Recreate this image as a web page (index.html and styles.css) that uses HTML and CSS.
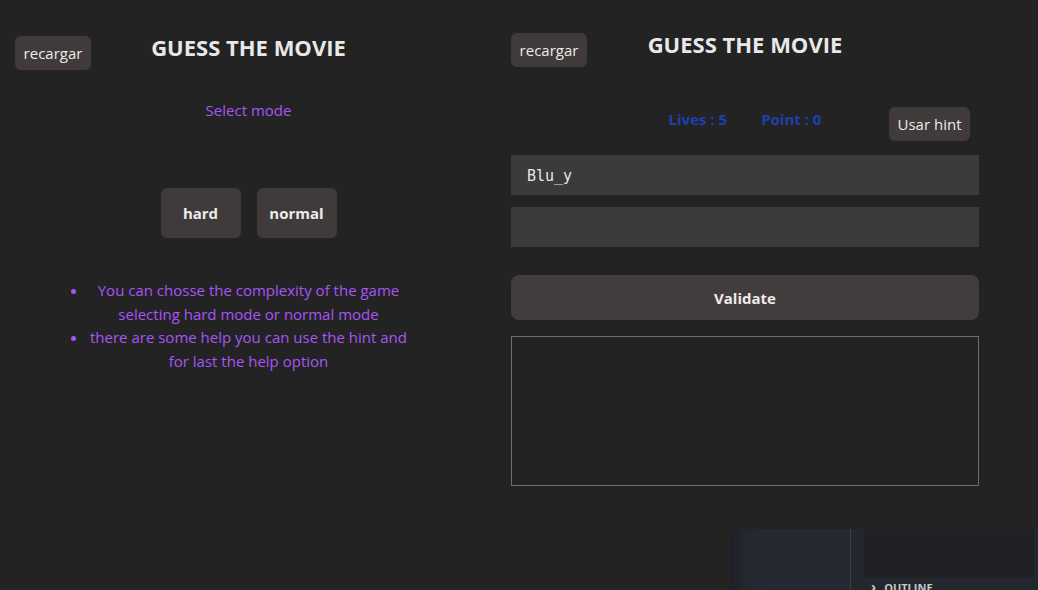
FILE: index.html
```html
<!DOCTYPE html>
<html lang="en">
<head>
<meta charset="utf-8">
<title>Guess the movie</title>
<link rel="stylesheet" href="styles.css">
</head>
<body>
<div class="page">
  <section class="panel panel-left">
    <header class="head">
      <button class="btn btn-reload">recargar</button>
      <h1 class="title">GUESS THE MOVIE</h1>
    </header>
    <p class="select">Select mode</p>
    <div class="modes">
      <button class="btn btn-mode">hard</button>
      <button class="btn btn-mode">normal</button>
    </div>
    <ul class="rules">
      <li>You can chosse the complexity of the game selecting hard mode or normal mode</li>
      <li>there are some help you can use the hint and for last the help option</li>
    </ul>
  </section>
  <section class="panel panel-right">
    <header class="head">
      <button class="btn btn-reload">recargar</button>
      <h1 class="title">GUESS THE MOVIE</h1>
    </header>
    <div class="stats">
      <div class="stats-text"><span>Lives : 5</span><span>Point : 0</span></div>
      <button class="btn btn-hint">Usar hint</button>
    </div>
    <div class="field field-word">Blu_y</div>
    <div class="field"></div>
    <button class="btn btn-validate">Validate</button>
    <div class="output"></div>
  </section>
</div>
<div class="ide">
  <div class="ide-side"></div>
  <div class="ide-main">
    <div class="ide-box"></div>
    <div class="ide-outline"><span class="chev">›</span>OUTLINE</div>
  </div>
</div>
</body>
</html>
```

FILE: styles.css
```css
* { box-sizing: border-box; }
html, body { margin: 0; padding: 0; }
body {
  background: #232323;
  font-family: "Open Sans", "Noto Sans", sans-serif;
  color: #e6e6e6;
  width: 1038px;
  height: 590px;
  overflow: hidden;
  position: relative;
}
.page { display: flex; }
.panel-left { width: 497px; padding: 36px 15px 0; }
.panel-right { width: 497px; padding: 33px 15px 0 14px; }

.head {
  display: grid;
  grid-template-columns: 1fr auto 1fr;
  align-items: start;
  height: 34px;
}
.title {
  grid-column: 2;
  margin: -6px 0 0;
  font-size: 22px;
  font-weight: 700;
  line-height: 34px;
  color: #e8e8e8;
}
.btn {
  font-family: inherit;
  border: none;
  color: #ececec;
  background: #403a3a;
  border-radius: 6px;
  cursor: pointer;
  padding: 0;
}
.btn-reload {
  grid-column: 1;
  justify-self: start;
  width: 76px;
  height: 34px;
  font-size: 15px;
}
.select {
  margin: 28px 0 0;
  text-align: center;
  color: #a855f7;
  font-size: 15px;
  line-height: 24px;
}
.modes {
  margin-top: 66px;
  display: flex;
  justify-content: center;
  gap: 16px;
}
.btn-mode {
  width: 80px;
  height: 50px;
  font-size: 15px;
  font-weight: 700;
}
.rules {
  width: 321px;
  margin: 41px auto 0;
  padding: 0;
  color: #a855f7;
  font-size: 15px;
  line-height: 23.7px;
  text-align: center;
}
.rules li::marker { color: #a855f7; }

.stats {
  margin-top: 40px;
  display: grid;
  grid-template-columns: 1fr auto 1fr;
  align-items: start;
}
.stats-text {
  grid-column: 2;
  display: flex;
  gap: 34px;
  color: #1e40af;
  font-weight: 700;
  font-size: 15px;
  line-height: 25px;
}
.btn-hint {
  grid-column: 3;
  justify-self: end;
  margin-right: 9px;
  width: 81px;
  height: 34px;
  font-size: 15px;
}
.field {
  height: 40px;
  background: #3b3b3b;
  margin-top: 14px;
  padding: 0 16px;
  font-family: "DejaVu Sans Mono", monospace;
  font-size: 15px;
  line-height: 43px;
  color: #e6e6e6;
}
.field + .field { margin-top: 12px; }
.btn-validate {
  display: block;
  width: 100%;
  height: 45px;
  margin-top: 28px;
  background: #433c3c;
  border-radius: 8px;
  font-size: 15px;
  font-weight: 700;
}
.output {
  margin-top: 16px;
  height: 150px;
  border: 1px solid #6b6f78;
}

.ide {
  position: absolute;
  left: 731px;
  top: 529px;
  width: 307px;
  height: 61px;
  display: flex;
  background: #23272e;
}
.ide-side {
  width: 120px;
  background: linear-gradient(90deg, #1d2025 0px, #23272e 14px, #252932 30px);
  border-right: 1px solid #3c3f46;
}
.ide-main { flex: 1; padding-left: 13px; }
.ide-box {
  width: 170px;
  height: 49px;
  background: #1f2125;
}
.ide-outline {
  font-family: "Open Sans", sans-serif;
  font-size: 11px;
  font-weight: 700;
  color: #c8c8c8;
  line-height: 18px;
  padding-left: 7px;
}
.chev { display: inline-block; margin-right: 8px; font-size: 14px; }
```
